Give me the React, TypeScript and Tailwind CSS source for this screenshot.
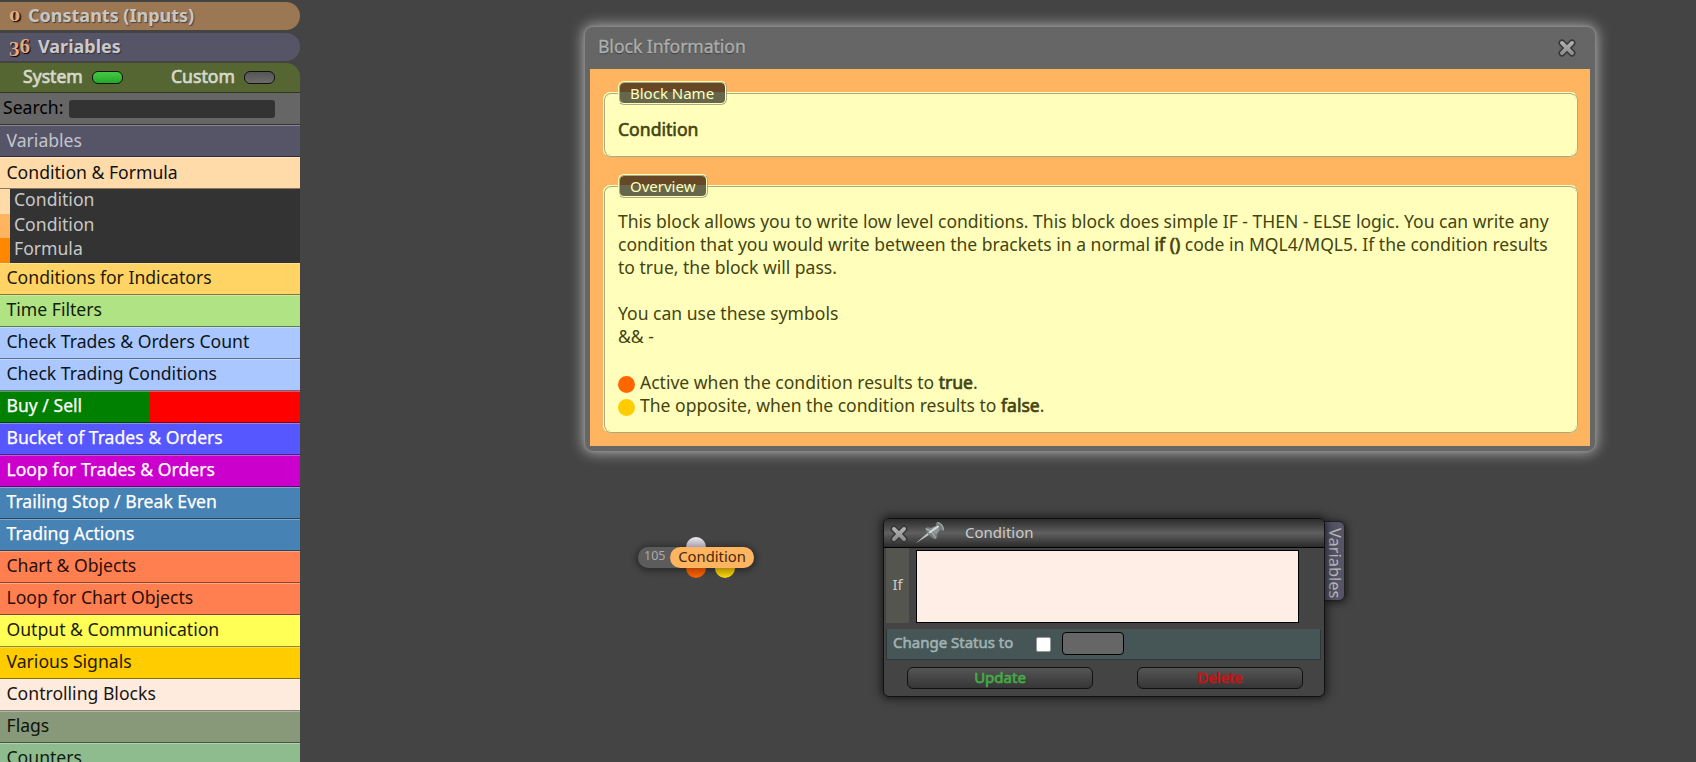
const rowsTop = [
  { t: "Variables", c: "bg-[#565568] text-[#c4c4cc]" },
  { t: "Condition & Formula", c: "bg-[#ffdbaa] text-[#111]" },
];

const subRows = [
  { t: "Condition", h: "h-[25px]", c: "bg-[#ffdbaa]" },
  { t: "Condition", h: "h-6", c: "bg-[#ffb45f]" },
  { t: "Formula", h: "h-[25px]", c: "bg-[#ff8800]" },
];

const light = "text-white [-webkit-text-stroke:0.25px_white]";
const rows = [
  { t: "Conditions for Indicators", c: "bg-[#ffd464] text-[#1f1a08]" },
  { t: "Time Filters", c: "bg-[#b0e384] text-[#10200a]" },
  { t: "Check Trades & Orders Count", c: "bg-[#aac8ff] text-[#0c1420]" },
  { t: "Check Trading Conditions", c: "bg-[#aac8ff] text-[#0c1420]" },
  { t: "Buy / Sell", c: "bg-linear-to-r from-[#008000] from-50% to-[#ff0000] to-50% " + light },
  { t: "Bucket of Trades & Orders", c: "bg-[#5757ff] " + light },
  { t: "Loop for Trades & Orders", c: "bg-[#cc00cc] " + light },
  { t: "Trailing Stop / Break Even", c: "bg-[#4682b4] " + light },
  { t: "Trading Actions", c: "bg-[#4682b4] " + light },
  { t: "Chart & Objects", c: "bg-[#ff7f50] text-[#2a0f08]" },
  { t: "Loop for Chart Objects", c: "bg-[#ff7f50] text-[#2a0f08]" },
  { t: "Output & Communication", c: "bg-[#ffff55] text-[#1c1c08]" },
  { t: "Various Signals", c: "bg-[#ffcc00] text-[#1f1a08]" },
  { t: "Controlling Blocks", c: "bg-[#ffebdd] text-[#1a1512]" },
  { t: "Flags", c: "bg-[#879979] text-[#0f140c]" },
  { t: "Counters", c: "bg-[#8fbc8f] text-[#0f1a0f]" },
];

function Row({ t, c, lead }: { t: string; c: string; lead: string }) {
  return (
    <div className={"h-8 shrink-0 whitespace-nowrap border-t border-b border-t-white/30 border-b-black/45 pl-[6.5px] " + lead + " " + c}>
      {t}
    </div>
  );
}

function Cross({ className }: { className: string }) {
  return (
    <svg viewBox="0 0 20 20" className={className}>
      <defs>
        <linearGradient id="cross" x1="0" y1="0" x2="0" y2="1">
          <stop offset="0" stopColor="#b4b4b4" />
          <stop offset="1" stopColor="#8a8a8a" />
        </linearGradient>
      </defs>
      <path d="M5 5 L15 15 M15 5 L5 15" stroke="#383838" strokeWidth="7" strokeLinecap="round" />
      <path
        d="M3.6 6.3A1.9 1.9 0 0 1 6.3 3.6L10 7.2 13.7 3.6A1.9 1.9 0 0 1 16.4 6.3L12.8 10 16.4 13.7A1.9 1.9 0 0 1 13.7 16.4L10 12.8 6.3 16.4A1.9 1.9 0 0 1 3.6 13.7L7.2 10Z"
        fill="url(#cross)"
      />
    </svg>
  );
}

function Pin() {
  return (
    <svg viewBox="0 0 30 24" className="h-6 w-[30px]">
      <path d="M0.5 22.5 L14.5 13.5 L13 11.5 Z" fill="#c0c4c4" />
      <path d="M10 7.5 Q12.5 5.5 16 7 L21 5 Q20 2 22.5 1 Q29 2.5 29 9.5 Q27 11 25 8.5 L22 12.5 Q23 17 20.5 18.5 Q13 15.5 10 7.5Z" fill="#737b7b" />
      <path d="M15 7.5 L21 5 L25 8.5 L21 14 Z" fill="#8f9797" />
      <path d="M11 8 Q16 8.5 20.5 17" stroke="#a5adad" strokeWidth="1.3" fill="none" />
      <path d="M14.5 11.5 L23 5.5" stroke="#d4dcdc" strokeWidth="2" strokeLinecap="round" fill="none" />
      <path d="M22.5 1.2 Q28 3 28.6 9" stroke="#a2aaaa" strokeWidth="1.2" fill="none" />
    </svg>
  );
}

const legend =
  "h-6 rounded-[6px] border-2 border-[#ffffbb] bg-black/60 pr-[11px] pl-[10px] text-[15px] leading-[20px] text-[#ffffbb] [border-style:ridge]";
const strong = "[-webkit-text-stroke:0.7px_#444411]";

export default function App() {
  return (
    <div className="relative flex h-[762px] w-[1696px] overflow-hidden bg-[#444] font-['Noto_Sans',sans-serif] text-[17.6px]">
      <aside className="flex h-full w-[300px] shrink-0 flex-col overflow-hidden pt-[2px]">
        <div className="mb-[3px] flex h-7 shrink-0 items-center rounded-r-[14px] bg-[#9b7753] pl-[9px] font-bold text-[#c9c6c2] [text-shadow:1px_1px_1px_#444]">
          <span className="w-[13px] font-['Liberation_Serif',serif] leading-none text-[#e8a880] [text-shadow:1px_1px_1px_#000]">
            <span className="inline-block origin-bottom-left scale-x-150 text-[15px]">0</span>
          </span>
          <span className="-mt-[3px] ml-[6px] text-[18px] leading-none">Constants (Inputs)</span>
        </div>
        <div className="mb-[2px] flex h-7 shrink-0 items-center rounded-r-[14px] bg-[#565568] pl-[9px] font-bold text-[#c9c9cf] [text-shadow:1px_1px_1px_#333]">
          <span className="-mt-px flex w-[23px] font-['Liberation_Serif',serif] text-[21px] leading-none text-[#e8a880] [text-shadow:1px_1px_1px_#000]">
            <span className="translate-y-[3px]">3</span>
            <span>6</span>
          </span>
          <span className="-mt-[3px] ml-[6px] text-[18px] leading-none">Variables</span>
        </div>
        <div className="flex h-[30px] shrink-0 items-center rounded-tr-[14px] border-b border-[#2f3820] bg-[#556633] pl-[23px] text-[#d6d8cc] [-webkit-text-stroke:0.7px_#d6d8cc]">
          <span className="-mt-px w-[69px] leading-none">System</span>
          <span className="h-[13px] w-[31px] rounded-[6px] border border-[#111] bg-linear-to-b from-[#44c844] to-[#22aa28]" />
          <span className="-mt-px ml-[48px] w-[73px] leading-none">Custom</span>
          <span className="h-[13px] w-[31px] rounded-[6px] border border-[#111] bg-linear-to-b from-[#555] to-[#6c6c6c]" />
        </div>
        <div className="flex h-8 shrink-0 items-center border-b border-[#333] bg-[#666] pl-[3px] text-black">
          <span className="-mt-[2px] w-[66px] leading-none">Search:</span>
          <span className="h-[18px] w-[206px] rounded-[3px] bg-[#333]" />
        </div>
        {rowsTop.map((r) => (
          <Row key={r.t} lead="leading-[28px]" {...r} />
        ))}
        {subRows.map((r, i) => (
          <div key={i} className={"flex shrink-0 bg-[#333] text-[#c8c8c8] " + r.h}>
            <span className={"mr-[4px] w-[10px] " + r.c} />
            <span className="leading-[21px]">{r.t}</span>
          </div>
        ))}
        {rows.map((r) => (
          <Row key={r.t} lead="leading-[26px]" {...r} />
        ))}
      </aside>

      <main className="relative flex-1">
        <section className="absolute top-[27px] left-[285px] flex h-[424px] w-[1010px] flex-col rounded-[8px] bg-[#666] px-[5px] pb-[5px] shadow-[0_0_2px_1px_#888,0_0_14px_2px_#aaa]">
          <header className="flex h-[42px] shrink-0 items-center justify-between pr-[13px] pl-[8px] text-[#adadad] [-webkit-text-stroke:0.4px_#adadad] [text-shadow:0_1px_1px_#333]">
            <span className="-mt-[3px] text-[17.5px]">Block Information</span>
            <Cross className="size-5" />
          </header>
          <div className="flex-1 bg-[#ffb45f] pt-3 pr-3 pl-[13px]">
            <fieldset className="h-[76px] rounded-[8px] border-2 border-[#ffffbb] bg-[#ffffbb] px-[13px] text-[#444411] [border-style:ridge]">
              <legend className={legend}>Block Name</legend>
              <div className="pt-[13px] leading-[23px] [-webkit-text-stroke:0.6px_#444411]">Condition</div>
            </fieldset>
            <fieldset className="mt-[17px] h-[259px] rounded-[8px] border-2 border-[#ffffbb] bg-[#ffffbb] px-[13px] text-[17.55px] text-[#444411] [border-style:ridge]">
              <legend className={legend}>Overview</legend>
              <div className="pt-3 leading-[23px] whitespace-nowrap">
                <p>
                  This block allows you to write low level conditions. This block does simple IF - THEN - ELSE logic. You can write any
                </p>
                <p>
                  condition that you would write between the brackets in a normal <span className={strong}>if ()</span> code in MQL4/MQL5.
                  If the condition results
                </p>
                <p>to true, the block will pass.</p>
                <p className="pt-[23px]">You can use these symbols</p>
                <p>&amp;&amp; -</p>
                <p className="flex items-center pt-[23px]">
                  <span className="mt-[3px] mr-[5px] size-[17px] rounded-full bg-[#ff6600]" />
                  <span>
                    Active when the condition results to <span className={strong}>true</span>.
                  </span>
                </p>
                <p className="flex items-center">
                  <span className="mt-[3px] mr-[5px] size-[17px] rounded-full bg-[#ffcc00]" />
                  <span>
                    The opposite, when the condition results to <span className={strong}>false</span>.
                  </span>
                </p>
              </div>
            </fieldset>
          </div>
        </section>

        <div className="absolute top-[547px] left-[338px] h-[21px] w-[116px]">
          <div className="absolute inset-0 rounded-full shadow-[0_1px_6px_2px_rgba(0,0,0,0.4)]" />
          <span className="absolute -top-[10px] left-[48px] size-5 rounded-full bg-linear-to-b from-[#eee] to-[#a9a0b4] to-50%" />
          <span className="absolute top-[11px] left-[48px] size-5 rounded-full bg-linear-to-b from-[#b84400] from-50% to-[#ff6600]" />
          <span className="absolute top-[11px] left-[77px] size-5 rounded-full bg-linear-to-b from-[#b09000] from-50% to-[#ffdd10]" />
          <div className="relative flex h-full items-center rounded-full bg-[#5c5c5c]">
            <span className="w-8 pb-[2px] pl-[6px] text-[12.5px] leading-none text-[#aaa]">105</span>
            <span className="flex h-full w-[84px] items-center justify-center rounded-full bg-[#ffb45f] pb-[3px] text-[14.8px] leading-none text-[#44280f]">
              Condition
            </span>
          </div>
        </div>

        <div className="absolute top-[521px] left-[1024px] flex h-[80px] w-[21px] items-center justify-center rounded-r-[6px] border border-[#222] bg-[#565568] pt-[4px] shadow-[1px_1px_8px_rgba(0,0,0,0.7)]">
          <span className="text-[16.4px] leading-none text-[#bbb] [writing-mode:vertical-rl]">Variables</span>
        </div>

        <section className="absolute top-[518px] left-[583px] flex h-[179px] w-[442px] flex-col overflow-hidden rounded-[6px] border border-[#111] bg-[#444] shadow-[0_0_10px_2px_rgba(0,0,0,0.6)]">
          <header className="flex h-[29px] shrink-0 items-center border-b border-black bg-linear-to-b from-[#2c2c2c] via-[#606060] to-[#2c2c2c] pl-[5px] text-[15px] text-[#ccc]">
            <Cross className="mt-[2px] size-5" />
            <span className="mr-[20px] ml-[6px]">
              <Pin />
            </span>
            <span className="-mt-px leading-none">Condition</span>
          </header>
          <div className="flex h-[81px] shrink-0 pl-[2px]">
            <span className="mr-[7px] flex h-[75px] w-[23px] items-center justify-center bg-[#55554f] pb-[3px] text-[15px] text-[#ccc]">If</span>
            <span className="mt-[2px] h-[73px] w-[383px] border border-black bg-[#ffeee6]" />
          </div>
          <div className="mr-[3px] ml-[2px] flex h-[31px] shrink-0 items-center border border-[#2c3838] border-t-[#465555] bg-[#465555] pl-[6px] text-[15px] text-[#9fb2b2] [-webkit-text-stroke:0.6px_#9fb2b2]">
            <span className="-mt-[4px] w-[143px] leading-none">Change Status to</span>
            <span className="size-[15px] rounded-[2px] border border-[#999] bg-white" />
            <span className="-mt-[2px] ml-[11px] h-[23px] w-[62px] rounded-[4px] border border-black bg-[#666]" />
          </div>
          <div className="flex pt-[7px] pl-[23px] text-center text-[15px] leading-[19px]">
            <span className="mr-[44px] h-[22px] w-[186px] rounded-[6px] border border-[#111] bg-linear-to-b from-[#555] to-[#363636] text-[#44aa44] [-webkit-text-stroke:0.7px_#44aa44]">
              Update
            </span>
            <span className="h-[22px] w-[166px] rounded-[6px] border border-[#111] bg-linear-to-b from-[#555] to-[#363636] text-[#cc1111] [-webkit-text-stroke:0.7px_#cc1111]">
              Delete
            </span>
          </div>
        </section>
      </main>
    </div>
  );
}
